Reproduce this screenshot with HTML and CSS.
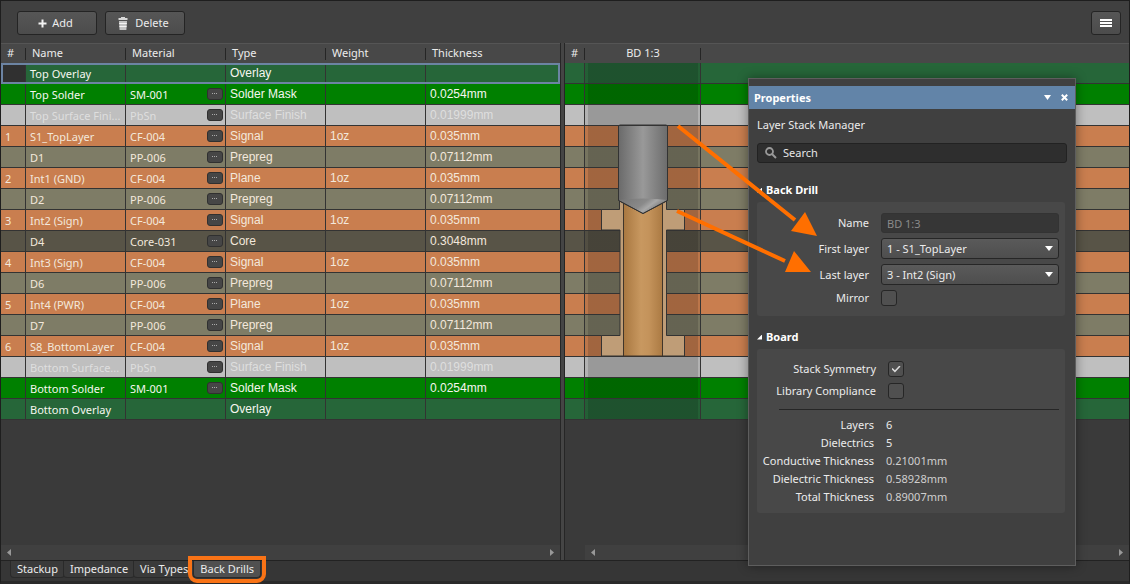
FILE: index.html
```html
<!DOCTYPE html>
<html lang="en">
<head>
<meta charset="utf-8">
<title>Layer Stack Manager</title>
<link rel="stylesheet" href="styles.css">
</head>
<body>
<div class="app">
  <header class="toolbar">
    <button class="btn" type="button"><svg width="9" height="9" viewBox="0 0 9 9"><path d="M3.500 0.500h2v3h3v2h-3v3h-2v-3h-3v-2h3z" fill="#f2f2f2"/></svg>Add</button>
    <button class="btn" type="button"><svg class="trash" width="10" height="13" viewBox="0 0 10 13"><path d="M3 0h4v1h2.500v2h-9V1H3z" fill="#d8d8d8"/><path d="M1 4h8l-.6 9H1.600z" fill="#c4c4c4"/><path d="M1.200 6.500h7.600M1.400 9.500h7.200" stroke="#f4f4f4"/></svg>Delete</button>
    <button class="btn menu-btn" type="button" aria-label="Menu"><svg width="12" height="8" viewBox="0 0 12 8"><path d="M0 1h12M0 4h12M0 7h12" stroke="#fff" stroke-width="2"/></svg></button>
  </header>

  <main class="split">
    <section class="pane">
      <table class="grid">
        <colgroup><col class="c-num"><col class="c-std"><col class="c-std"><col class="c-std"><col class="c-std"><col></colgroup>
        <thead><tr><th>#</th><th>Name</th><th>Material</th><th>Type</th><th>Weight</th><th>Thickness</th></tr></thead>
        <tbody>
          <tr class="overlay selected"><td></td><td>Top Overlay</td><td></td><td>Overlay</td><td></td><td></td></tr>
          <tr class="solder"><td></td><td>Top Solder</td><td><span class="mat">SM-001<button type="button" class="more" aria-label="Choose material"></button></span></td><td>Solder Mask</td><td></td><td>0.0254mm</td></tr>
          <tr class="finish"><td></td><td>Top Surface Fini...</td><td><span class="mat">PbSn<button type="button" class="more" aria-label="Choose material"></button></span></td><td>Surface Finish</td><td></td><td>0.01999mm</td></tr>
          <tr class="copper"><td>1</td><td>S1_TopLayer</td><td><span class="mat">CF-004<button type="button" class="more" aria-label="Choose material"></button></span></td><td>Signal</td><td>1oz</td><td>0.035mm</td></tr>
          <tr class="prepreg"><td></td><td>D1</td><td><span class="mat">PP-006<button type="button" class="more" aria-label="Choose material"></button></span></td><td>Prepreg</td><td></td><td>0.07112mm</td></tr>
          <tr class="copper"><td>2</td><td>Int1 (GND)</td><td><span class="mat">CF-004<button type="button" class="more" aria-label="Choose material"></button></span></td><td>Plane</td><td>1oz</td><td>0.035mm</td></tr>
          <tr class="prepreg"><td></td><td>D2</td><td><span class="mat">PP-006<button type="button" class="more" aria-label="Choose material"></button></span></td><td>Prepreg</td><td></td><td>0.07112mm</td></tr>
          <tr class="copper"><td>3</td><td>Int2 (Sign)</td><td><span class="mat">CF-004<button type="button" class="more" aria-label="Choose material"></button></span></td><td>Signal</td><td>1oz</td><td>0.035mm</td></tr>
          <tr class="core"><td></td><td>D4</td><td><span class="mat">Core-031<button type="button" class="more" aria-label="Choose material"></button></span></td><td>Core</td><td></td><td>0.3048mm</td></tr>
          <tr class="copper"><td>4</td><td>Int3 (Sign)</td><td><span class="mat">CF-004<button type="button" class="more" aria-label="Choose material"></button></span></td><td>Signal</td><td>1oz</td><td>0.035mm</td></tr>
          <tr class="prepreg"><td></td><td>D6</td><td><span class="mat">PP-006<button type="button" class="more" aria-label="Choose material"></button></span></td><td>Prepreg</td><td></td><td>0.07112mm</td></tr>
          <tr class="copper"><td>5</td><td>Int4 (PWR)</td><td><span class="mat">CF-004<button type="button" class="more" aria-label="Choose material"></button></span></td><td>Plane</td><td>1oz</td><td>0.035mm</td></tr>
          <tr class="prepreg"><td></td><td>D7</td><td><span class="mat">PP-006<button type="button" class="more" aria-label="Choose material"></button></span></td><td>Prepreg</td><td></td><td>0.07112mm</td></tr>
          <tr class="copper"><td>6</td><td>S8_BottomLayer</td><td><span class="mat">CF-004<button type="button" class="more" aria-label="Choose material"></button></span></td><td>Signal</td><td>1oz</td><td>0.035mm</td></tr>
          <tr class="finish"><td></td><td>Bottom Surface...</td><td><span class="mat">PbSn<button type="button" class="more" aria-label="Choose material"></button></span></td><td>Surface Finish</td><td></td><td>0.01999mm</td></tr>
          <tr class="solder"><td></td><td>Bottom Solder</td><td><span class="mat">SM-001<button type="button" class="more" aria-label="Choose material"></button></span></td><td>Solder Mask</td><td></td><td>0.0254mm</td></tr>
          <tr class="overlay"><td></td><td>Bottom Overlay</td><td></td><td>Overlay</td><td></td><td></td></tr>
        </tbody>
      </table>
      <div class="scrollbar"><i class="arrow-left"></i><i class="arrow-right"></i></div>
    </section>

    <div class="splitter"></div>

    <section class="pane drill-pane">
      <table class="grid drill-grid">
        <colgroup><col class="c-dnum"><col class="c-drill"><col></colgroup>
        <thead><tr><th>#</th><th>BD 1:3</th><th></th></tr></thead>
        <tbody>
          <tr class="overlay"><td></td><td></td><td></td></tr>
          <tr class="solder"><td></td><td></td><td></td></tr>
          <tr class="finish"><td></td><td></td><td></td></tr>
          <tr class="copper"><td></td><td></td><td></td></tr>
          <tr class="prepreg"><td></td><td></td><td></td></tr>
          <tr class="copper"><td></td><td></td><td></td></tr>
          <tr class="prepreg"><td></td><td></td><td></td></tr>
          <tr class="copper"><td></td><td></td><td></td></tr>
          <tr class="core"><td></td><td></td><td></td></tr>
          <tr class="copper"><td></td><td></td><td></td></tr>
          <tr class="prepreg"><td></td><td></td><td></td></tr>
          <tr class="copper"><td></td><td></td><td></td></tr>
          <tr class="prepreg"><td></td><td></td><td></td></tr>
          <tr class="copper"><td></td><td></td><td></td></tr>
          <tr class="finish"><td></td><td></td><td></td></tr>
          <tr class="solder"><td></td><td></td><td></td></tr>
          <tr class="overlay"><td></td><td></td><td></td></tr>
        </tbody>
      </table>
      <svg class="drill" width="116" height="357" viewBox="0 0 116 357" aria-hidden="true">
        <defs>
          <linearGradient id="steel"><stop offset="0" stop-color="#6a6a6a"/><stop offset=".5" stop-color="#999"/><stop offset="1" stop-color="#6c6c6c"/></linearGradient>
          <linearGradient id="barrel"><stop offset="0" stop-color="#a87740"/><stop offset=".45" stop-color="#c89860"/><stop offset=".65" stop-color="#c4935b"/><stop offset="1" stop-color="#ab7a43"/></linearGradient>
          <linearGradient id="tip" x2="1" y2=".4"><stop offset="0" stop-color="#757575"/><stop offset=".55" stop-color="#8a8a8a"/><stop offset=".72" stop-color="#a8a8a8"/><stop offset="1" stop-color="#6e6e6e"/></linearGradient>
        </defs>
        <path d="M34.500 62v84.500h-18v20.500h18.500v105.500h-18.500v20.500h83v-20.500h-18v-105.500h18v-20.500h-18v-84.500z" fill="#bf9d77" stroke="#333"/>
        <path d="M38.500 293V130h39v163z" fill="url(#barrel)" stroke="#40352a"/>
        <path d="M33.500 62.500h49v75l-24.500 13-24.500-13z" fill="url(#steel)" stroke="#333"/>
        <path d="M34 137q24-3 48 0l-24 13z" fill="url(#tip)"/>
        <path d="M33.500 137.500l24.500 13 24.500-13" fill="none" stroke="#333"/>
      </svg>
      <div class="scrollbar drill-scroll"><i class="arrow-left"></i><i class="arrow-right"></i></div>
    </section>
  </main>

  <nav class="tabs">
    <button type="button" class="tab">Stackup</button>
    <button type="button" class="tab">Impedance</button>
    <button type="button" class="tab">Via Types</button>
    <button type="button" class="tab active">Back Drills</button>
  </nav>

  <aside class="panel">
    <div class="panel-title"><h1>Properties</h1>
      <button type="button" aria-label="Options"><svg width="7" height="5" viewBox="0 0 7 5"><path d="M0 0h7L3.500 5z" fill="#fff"/></svg></button>
      <button type="button" aria-label="Close"><svg width="7" height="7" viewBox="0 0 7 7"><path d="M.8.8l5.400 5.400M6.200.8L.8 6.200" stroke="#fff" stroke-width="2"/></svg></button>
    </div>
    <div class="panel-body">
      <p class="context">Layer Stack Manager</p>
      <div class="search">
        <svg width="12" height="12" viewBox="0 0 12 12"><circle cx="4.500" cy="4.500" r="3.500" fill="none" stroke="#999" stroke-width="1.800"/><path d="M7 7l4 4" stroke="#999" stroke-width="2"/></svg>
        <input type="search" placeholder="Search" aria-label="Search">
      </div>

      <h2><i class="fold"></i>Back Drill</h2>
      <div class="box form">
        <label for="name">Name</label><input id="name" class="text" type="text" value="BD 1:3" disabled>
        <label for="first">First layer</label><span class="select"><select id="first"><option>1 - S1_TopLayer</option></select></span>
        <label for="last">Last layer</label><span class="select"><select id="last"><option>3 - Int2 (Sign)</option></select></span>
        <label for="mirror">Mirror</label><input id="mirror" type="checkbox">
      </div>

      <h2><i class="fold"></i>Board</h2>
      <div class="box">
        <div class="checks">
          <label for="symmetry">Stack Symmetry</label><input id="symmetry" type="checkbox" checked>
          <label for="library">Library Compliance</label><input id="library" type="checkbox">
        </div>
        <hr>
        <dl class="stats">
          <dt>Layers</dt><dd>6</dd>
          <dt>Dielectrics</dt><dd>5</dd>
          <dt>Conductive Thickness</dt><dd class="dim">0.21001mm</dd>
          <dt>Dielectric Thickness</dt><dd class="dim">0.58928mm</dd>
          <dt>Total Thickness</dt><dd class="dim">0.89007mm</dd>
        </dl>
      </div>
    </div>
  </aside>

  <svg class="callouts" width="150" height="160" viewBox="0 0 150 160" aria-hidden="true">
    <path d="M7 6l117 94M6 91l108 50" stroke="#ff6f00" stroke-width="4"/>
    <path d="M146 116l-12-24-14 19zM140 152l-17-21-9 21z" fill="#ff6f00"/>
  </svg>
</div>
</body>
</html>
```
FILE: styles.css
```css
* { box-sizing: border-box; }

body {
  margin: 0;
  background: #3a3a3a;
  color: #ececec;
  font: 11px/16px "Noto Sans", "Open Sans", sans-serif;
}

button, input, select { font: inherit; color: inherit; }

.app {
  position: relative;
  display: flex;
  flex-direction: column;
  min-height: 100vh;
  border: 1px solid #1e1e1e;
  border-bottom: 3px solid #2a2a2a;
}

/* Toolbar */
.toolbar {
  display: flex;
  align-items: center;
  gap: 8px;
  height: 42px;
  padding: 2px 8px 0 16px;
  background: #404040;
}

.btn {
  display: flex;
  align-items: center;
  justify-content: center;
  gap: 5px;
  width: 80px;
  height: 24px;
  padding: 0 3px 0 0;
  border: 1px solid #242424;
  border-radius: 3px;
  background: linear-gradient(#565656, #4c4c4c);
}

.btn .trash { margin-right: 2px; }

.menu-btn { width: 30px; margin-left: auto; padding: 0; }

/* Split view */
.split {
  flex: 1;
  display: grid;
  grid-template-columns: 559px 5px 1fr;
}

.pane {
  position: relative;
  display: flex;
  flex-direction: column;
  min-width: 0;
  background: #3a3a3a;
}

.splitter {
  border: solid #262626;
  border-width: 0 1px;
  background: #454545;
}

.grid {
  width: 100%;
  table-layout: fixed;
  border-collapse: separate;
  border-spacing: 0;
}

.c-num { width: 25px; }
.c-std { width: 100px; }
.c-dnum { width: 20px; }
.c-drill { width: 116px; }

.grid th {
  height: 20px;
  padding: 0 6px 2px;
  border-top: 1px solid #555;
  background: linear-gradient(#252525, #252525) right center / 1px 12px no-repeat, #484848;
  font-weight: 400;
  text-align: left;
}

.grid th:last-child { background: #484848; }

.grid td {
  height: 21px;
  padding: 1px 4px 0;
  border-right: 1px solid #333;
  border-bottom: 1px solid #333;
  color: #f3e8dc;
  line-height: 18px;
  white-space: nowrap;
  overflow: hidden;
  text-overflow: ellipsis;
}

.grid td:last-child { border-right: 0; }

.grid td:nth-child(n+4) {
  padding: 0 4px 1px;
  font: 12px/18px "Liberation Sans", Arial, sans-serif;
}

.overlay td { background: #266639; }
.solder td { background: #008000; }
.finish td { background: #bfbfbf; }
.copper td { background: #c97e4f; }
.prepreg td { background: #7e7c66; }
.core td { background: #585447; }

.grid .finish td { color: #dedede; }
.grid .overlay td, .grid .solder td { color: #f6f6f0; }

.selected { outline: 2px solid #6c84a3; outline-offset: -2px; }
.selected td:first-child { background: #303030; }

.mat { display: flex; align-items: center; justify-content: space-between; }

.more {
  display: grid;
  place-items: center;
  width: 16px;
  height: 12px;
  margin: 0 -2px 2px 0;
  padding: 0;
  border: 1px solid #303030;
  border-radius: 3px;
  background: #464646;
}

.more::before {
  content: "";
  width: 6px;
  height: 1px;
  background: repeating-linear-gradient(90deg, #aaa 0 1px, transparent 1px 2px);
}

.drill-grid th:nth-child(2) { text-align: center; }

.drill-grid td:nth-child(2) {
  background-image: linear-gradient(90deg, #0001 0 3px, #0003 3px 113px, #0001 113px);
}

.drill {
  position: absolute;
  top: 20px;
  left: 20px;
}

.scrollbar {
  display: flex;
  align-items: center;
  justify-content: space-between;
  height: 15px;
  margin-top: auto;
  padding: 0 6px;
  background: #404040;
}

.drill-scroll { margin-left: 20px; }

.arrow-left, .arrow-right {
  width: 4px;
  height: 7px;
  background: #999;
  clip-path: polygon(100% 0, 100% 100%, 0 50%);
}

.arrow-right { clip-path: polygon(0 0, 100% 50%, 0 100%); }

/* Bottom tabs */
.tabs {
  position: relative;
  display: flex;
  height: 21px;
  padding-left: 9px;
  border-top: 1px solid #222;
  background: #363636;
}

.tab {
  height: 17px;
  margin-right: -2px;
  padding: 0 6px;
  border: 1px solid #2a2a2a;
  border-top: 0;
  border-radius: 0 0 4px 4px;
  background: #3a3a3a;
  line-height: 16px;
}

.tab.active {
  background: #505050;
  outline: 4px solid #f97316;
  outline-offset: 1px;
}

/* Properties panel */
.panel {
  position: absolute;
  top: 77px;
  right: 53px;
  width: 328px;
  min-height: 488px;
  padding-top: 7px;
  border: 1px solid #5e5e5e;
  background: #404040;
  box-shadow: 0 0 10px #0006;
}

.panel-title {
  display: flex;
  align-items: center;
  gap: 10px;
  height: 23px;
  padding: 0 7px 0 5px;
  background: #6284a8;
}

.panel-title h1 { margin: 0 auto 0 0; font-size: 11px; color: #fff; }

.panel-title button { display: flex; padding: 0; border: 0; background: none; }

.panel-body { padding: 8px; }

.context { margin: 0 0 10px; }

.search {
  display: flex;
  align-items: center;
  gap: 6px;
  height: 20px;
  padding: 0 7px;
  border: 1px solid #222;
  border-radius: 3px;
  background: #2e2e2e;
}

.search input {
  flex: 1;
  min-width: 0;
  padding: 0;
  border: 0;
  outline: 0;
  background: none;
}

.search input::placeholder { color: #e6e6e6; }

.panel h2 {
  display: flex;
  align-items: center;
  gap: 4px;
  margin: 13px 0 4px;
  color: #fff;
  font-size: 11px;
  line-height: 16px;
}

.search + h2 { margin-top: 19px; }

.fold {
  width: 5px;
  height: 5px;
  background: #fff;
  clip-path: polygon(100% 0, 100% 100%, 0 100%);
}

.box {
  margin-right: 2px;
  padding: 12px 6px 8px;
  border-radius: 3px;
  background: #484848;
}

.form, .checks, .stats {
  display: grid;
  align-items: center;
}

.form label, .checks label, .stats dt {
  justify-self: end;
  white-space: nowrap;
}

.form {
  grid-template-columns: 106px 1fr;
  gap: 5px 12px;
  padding: 11px 6px 10px;
}

.text, .select select {
  width: 100%;
  height: 21px;
  padding: 0 5px;
  border: 1px solid #262626;
  border-radius: 3px;
  background: linear-gradient(#5a5a5a, #4e4e4e);
}

.text, .text:disabled {
  height: 20px;
  border-color: #333;
  background: #363636;
  color: #8a8a8a;
}

.select { position: relative; display: flex; }

.select select { appearance: none; }

.select::after {
  content: "";
  position: absolute;
  top: 8px;
  right: 6px;
  width: 8px;
  height: 5px;
  background: #fff;
  clip-path: polygon(0 0, 100% 0, 50% 100%);
  pointer-events: none;
}

input[type="checkbox"] {
  appearance: none;
  display: grid;
  place-items: center;
  width: 16px;
  height: 16px;
  margin: 0;
  border: 1px solid #262626;
  border-radius: 3px;
  background: #505050;
}

input[type="checkbox"]:checked::before {
  content: "";
  width: 9px;
  height: 7px;
  background: #ddd;
  clip-path: polygon(0 50%, 12% 36%, 38% 68%, 88% 0, 100% 14%, 38% 100%);
}

.checks {
  grid-template-columns: 113px 1fr;
  gap: 6px 12px;
}

hr {
  margin: 10px 0 7px 16px;
  border: 0;
  border-top: 1px solid #262626;
}

.stats {
  grid-template-columns: 111px 1fr;
  gap: 2px 12px;
  margin: 0;
}

.stats dd { margin: 0; }
.stats .dim { color: #cfcfcf; }

.callouts {
  position: absolute;
  top: 119px;
  right: 308px;
  pointer-events: none;
}
```
